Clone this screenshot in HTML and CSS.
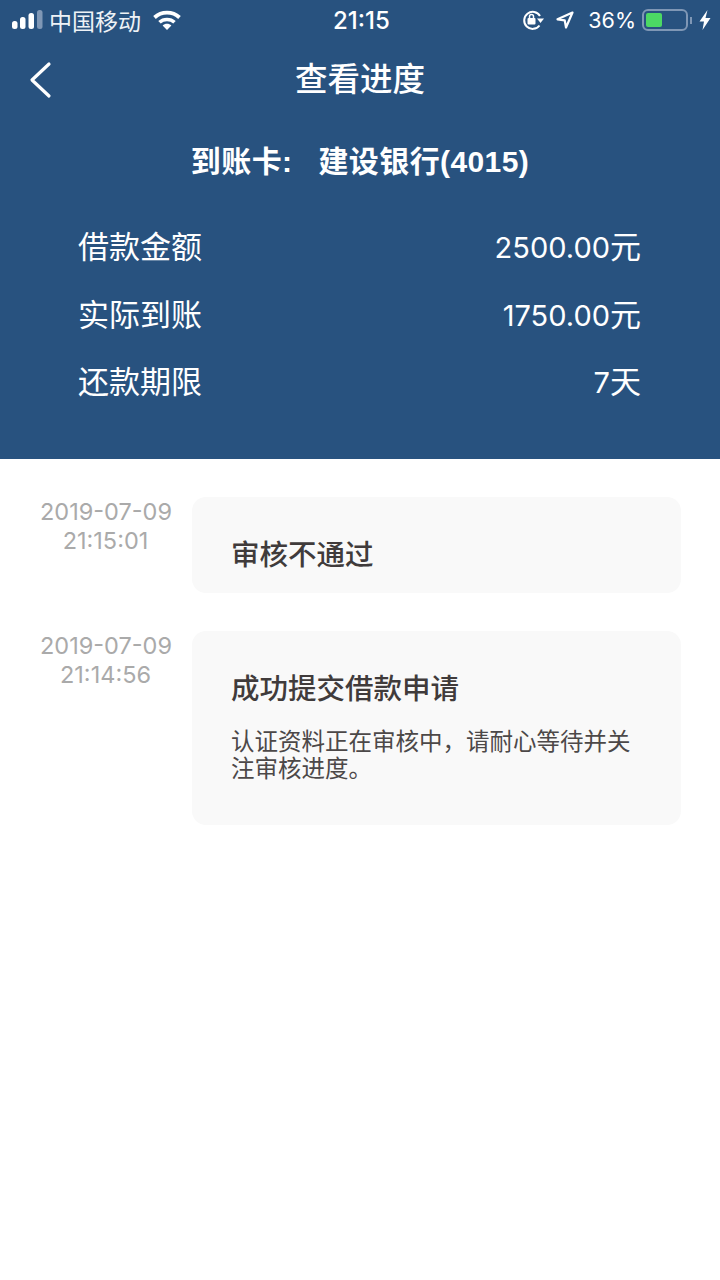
FILE: index.html
```html
<!DOCTYPE html>
<html lang="zh-CN">

<head>
    <meta charset="UTF-8">
    <meta name="viewport" content="width=device-width, initial-scale=1.0">
    <title>查看进度</title>
    <link rel="stylesheet" href="styles.css">
</head>

<body>
    <header class="top">
        <div class="status-bar">
            <div class="status-left">
                <svg class="signal" width="31" height="20" viewBox="0 0 31 20">
                    <rect x="0" y="11" width="5.500" height="8" rx="2.500" fill="#fff" />
                    <rect x="8" y="7" width="5.500" height="12" rx="2.500" fill="#fff" />
                    <rect x="16.500" y="3" width="5.500" height="16" rx="2.500" fill="#fff" />
                    <rect x="25" y="0" width="5.500" height="19" rx="2.500" fill="#7f97b5" />
                </svg>
                <span class="carrier">中国移动</span>
                <svg class="wifi" width="28" height="20" viewBox="0 0 28 20">
                    <path d="M1.500 7.500C8.500 1 19.500 1 26.500 7.500" fill="none" stroke="#fff" stroke-width="3.800" />
                    <path d="M6.500 12.300C10.500 8.500 17.500 8.500 21.500 12.300" fill="none" stroke="#fff" stroke-width="3.600" />
                    <path d="M14 20L9.600 15.400C12 13.300 16 13.300 18.400 15.400Z" fill="#fff" />
                </svg>
            </div>
            <div class="status-time">21:15</div>
            <div class="status-right">
                <svg class="lock" width="24" height="22" viewBox="0 0 24 22">
                    <path d="M18.500 16.500A8.500 8.500 0 1 1 19 7" fill="none" stroke="#fff" stroke-width="2" />
                    <path d="M16 9.500H23L19.500 14Z" fill="#fff" />
                    <rect x="6.500" y="9" width="8" height="6.500" rx="1" fill="#fff" />
                    <path d="M8.500 9V7.500a2 2 0 0 1 4 0V9" fill="none" stroke="#fff" stroke-width="1.500" />
                </svg>
                <svg class="arrow" width="20" height="20" viewBox="0 0 20 20">
                    <path d="M17.500 2.500L2.500 9.300L9.700 10.300L11 17.500Z" fill="none" stroke="#fff" stroke-width="2.200" stroke-linejoin="round" />
                </svg>
                <span class="percent">36%</span>
                <div class="battery">
                    <div class="battery-level"></div>
                </div>
                <div class="battery-cap"></div>
                <svg class="bolt" width="12" height="20" viewBox="0 0 12 20">
                    <path d="M8.500 0L0.500 11.500H5L3.500 20L11.500 8H6.500Z" fill="#fff" />
                </svg>
            </div>
        </div>
        <div class="nav">
            <svg class="back" width="24" height="38" viewBox="0 0 24 38">
                <path d="M21 3L4 19L21 35" fill="none" stroke="#fff" stroke-width="3.200" stroke-linecap="round" stroke-linejoin="round" />
            </svg>
            <h1>查看进度</h1>
        </div>
        <div class="card-name"><span class="card-label">到账卡:</span>建设银行(4015)</div>
        <div class="info-list">
            <div class="info-row"><span>借款金额</span><span class="info-value">2500.00<span class="unit">元</span></span></div>
            <div class="info-row"><span>实际到账</span><span class="info-value">1750.00<span class="unit">元</span></span></div>
            <div class="info-row"><span>还款期限</span><span class="info-value">7<span class="unit">天</span></span></div>
        </div>
    </header>
    <main class="timeline">
        <section class="step">
            <div class="step-time">2019-07-09<br>21:15:01</div>
            <div class="step-box">
                <h2>审核不通过</h2>
            </div>
        </section>
        <section class="step">
            <div class="step-time">2019-07-09<br>21:14:56</div>
            <div class="step-box">
                <h2>成功提交借款申请</h2>
                <p>认证资料正在审核中，请耐心等待并关注审核进度。</p>
            </div>
        </section>
    </main>
</body>

</html>
```

FILE: styles.css
```css
* {
    box-sizing: border-box;
}

body {
    margin: 0;
    background-color: #fff;
    font-family: "Liberation Sans", "Noto Sans CJK SC", sans-serif;
}

.top {
    height: 459px;
    background-color: #28527f;
    color: #fff;
}

.status-bar {
    height: 40px;
    display: flex;
    align-items: center;
    justify-content: space-between;
    padding: 0 9px 0 12px;
    position: relative;
}

.status-left,
.status-right {
    display: flex;
    align-items: center;
}

.carrier {
    font-size: 23px;
    margin-left: 6px;
    color: #eef2f6;
}

.wifi {
    margin-left: 12px;
}

.status-time {
    position: absolute;
    left: 3px;
    right: 0;
    text-align: center;
    font-family: Inter, sans-serif;
    font-size: 24px;
    font-weight: 500;
    pointer-events: none;
}

.arrow {
    margin-left: 9.500px;
}

.percent {
    font-family: Inter, sans-serif;
    font-size: 21.500px;
    font-weight: 400;
    margin-left: 13.500px;
}

.battery {
    width: 46px;
    height: 22px;
    margin-left: 6px;
    padding: 2px;
    border: 2px solid #7f97b5;
    border-radius: 6px;
}

.battery-level {
    width: 16px;
    height: 100%;
    background-color: #4cd964;
    border-radius: 2px;
}

.battery-cap {
    width: 2px;
    height: 7px;
    margin-left: 2px;
    background-color: #7f97b5;
}

.bolt {
    margin-left: 7px;
}

.nav {
    height: 80px;
    display: flex;
    align-items: center;
    justify-content: center;
    position: relative;
}

.back {
    position: absolute;
    left: 28px;
    top: 21px;
}

.nav h1 {
    margin: 0;
    font-size: 32.500px;
    font-weight: 500;
    line-height: 84px;
}

.card-name {
    margin-top: 20px;
    text-align: center;
    font-size: 30px;
    font-weight: bold;
    line-height: 44px;
    letter-spacing: 0.400px;
}

.card-label {
    margin-right: 26px;
}

.info-list {
    margin-top: 39px;
    padding: 0 79px 0 78px;
}

.info-row {
    display: flex;
    justify-content: space-between;
    height: 67.500px;
    font-size: 31px;
    line-height: 50px;
}

.info-value {
    font-family: Inter, "Noto Sans CJK SC", sans-serif;
    font-size: 29px;
    font-weight: 400;
    line-height: 44px;
}

.unit {
    font-family: "Noto Sans CJK SC", sans-serif;
    font-size: 31px;
}

.timeline {
    padding: 38px 39px 0 0;
}

.step {
    display: flex;
    margin-bottom: 38px;
}

.step-time {
    width: 192px;
    padding: 0 21px 0 40px;
    text-align: center;
    font-family: Inter, sans-serif;
    font-size: 23.500px;
    line-height: 29px;
    color: #aaa;
    white-space: nowrap;
}

.step-box {
    flex: 1;
    padding: 38px 40px 18px 39px;
    background-color: #f9f9f9;
    border-radius: 14px;
}

.step-box h2 {
    margin: 0;
    font-size: 28.500px;
    font-weight: 500;
    line-height: 40px;
    color: #403b3b;
}

.step-box p {
    margin: 20px 0 0;
    padding-bottom: 24px;
    font-size: 23.500px;
    line-height: 27px;
    color: #4c4848;
}
```
